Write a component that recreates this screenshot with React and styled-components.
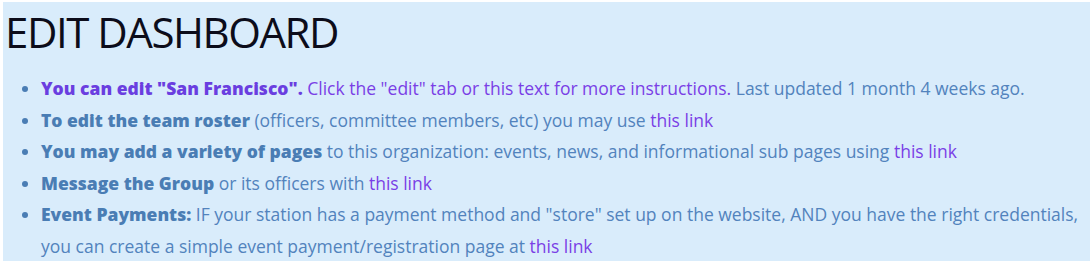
import React from 'react';
import styled, { createGlobalStyle } from 'styled-components';

const GlobalStyle = createGlobalStyle`
  body {
    margin: 0;
    background: #ffffff;
    font-family: "Open Sans", "Noto Sans", sans-serif;
  }
`;

const Panel = styled.section`
  margin: 2px 0 0 3px;
  min-height: 259px;
  background: #d9ecfb;
  padding: 4px 2px 0;
`;

const Title = styled.h1`
  margin: 0;
  font-size: 42px;
  font-weight: 400;
  letter-spacing: -1.45px;
  line-height: 52px;
  color: #0c0c1a;
`;

const List = styled.ul`
  margin: 15px 0 0;
  padding-left: 36px;
  font-size: 17.5px;
  line-height: 31.5px;
  color: #5283bd;
`;

const Item = styled.li`
  &::marker {
    color: #4a7db4;
  }
`;

const Strong = styled.b`
  font-weight: 800;
  color: ${p => (p.$accent ? '#6a3ee0' : '#4a7db4')};
`;

const Link = styled.a`
  color: #7a3fe6;
  text-decoration: none;
  cursor: pointer;
`;

export default function App() {
  return (
    <>
      <GlobalStyle />
      <Panel>
        <Title>EDIT DASHBOARD</Title>
        <List>
          <Item>
            <Link>
              <Strong $accent>You can edit "San Francisco".</Strong> Click the "edit" tab or this text for more instructions.
            </Link>{' '}
            Last updated 1 month 4 weeks ago.
          </Item>
          <Item>
            <Strong>To edit the team roster</Strong> (officers, committee members, etc) you may use <Link>this link</Link>
          </Item>
          <Item>
            <Strong>You may add a variety of pages</Strong> to this organization: events, news, and informational sub pages using <Link>this link</Link>
          </Item>
          <Item>
            <Strong>Message the Group</Strong> or its officers with <Link>this link</Link>
          </Item>
          <Item>
            <Strong>Event Payments:</Strong> IF your station has a payment method and "store" set up on the website, AND you have the right credentials, you can create a simple event payment/registration page at <Link>this link</Link>
          </Item>
        </List>
      </Panel>
    </>
  );
}
